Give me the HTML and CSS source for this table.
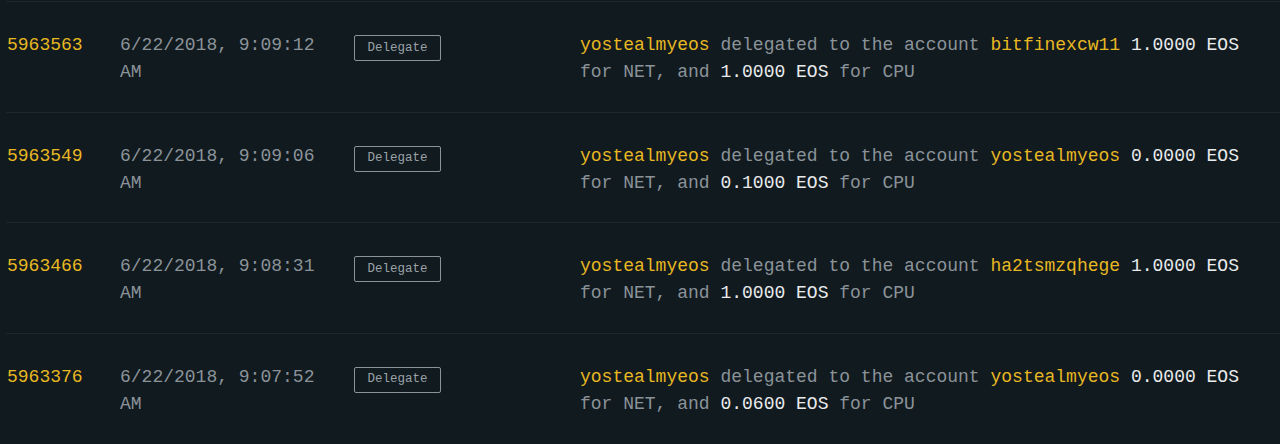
FILE: index.html
```html
<!DOCTYPE html>
<html lang="en">
<head>
<meta charset="utf-8">
<title>Actions</title>
<link rel="stylesheet" href="styles.css">
</head>
<body>
<div class="list">
  <div class="row">
    <div class="num">5963563</div>
    <div class="date">6/22/2018, 9:09:12 AM</div>
    <div class="act"><span class="btn">Delegate</span></div>
    <div class="desc"><span class="acc">yostealmyeos</span> delegated to the account <span class="acc">bitfinexcw11</span> <span class="amt">1.0000 EOS</span> for NET, and <span class="amt">1.0000 EOS</span> for CPU</div>
  </div>
  <div class="row">
    <div class="num">5963549</div>
    <div class="date">6/22/2018, 9:09:06 AM</div>
    <div class="act"><span class="btn">Delegate</span></div>
    <div class="desc"><span class="acc">yostealmyeos</span> delegated to the account <span class="acc">yostealmyeos</span> <span class="amt">0.0000 EOS</span> for NET, and <span class="amt">0.1000 EOS</span> for CPU</div>
  </div>
  <div class="row">
    <div class="num">5963466</div>
    <div class="date">6/22/2018, 9:08:31 AM</div>
    <div class="act"><span class="btn">Delegate</span></div>
    <div class="desc"><span class="acc">yostealmyeos</span> delegated to the account <span class="acc">ha2tsmzqhege</span> <span class="amt">1.0000 EOS</span> for NET, and <span class="amt">1.0000 EOS</span> for CPU</div>
  </div>
  <div class="row">
    <div class="num">5963376</div>
    <div class="date">6/22/2018, 9:07:52 AM</div>
    <div class="act"><span class="btn">Delegate</span></div>
    <div class="desc"><span class="acc">yostealmyeos</span> delegated to the account <span class="acc">yostealmyeos</span> <span class="amt">0.0000 EOS</span> for NET, and <span class="amt">0.0600 EOS</span> for CPU</div>
  </div>
</div>
</body>
</html>
```
FILE: styles.css
```css
html, body {
  margin: 0;
  background: #111a1f;
}
body {
  font-family: "Liberation Mono", "DejaVu Sans Mono", monospace;
  font-size: 18px;
  line-height: 27px;
  color: #8b9399;
  overflow: hidden;
}
.list {
  padding: 1px 0 0 6px;
}
.row {
  display: grid;
  grid-template-columns: 114px 234px 226px 680px;
  border-top: 1px solid #1e272d;
  padding: 30px 0 25.5px;
  align-items: start;
}
.num {
  color: #e8b822;
  padding-left: 1px;
}
.date {
  width: 210px;
}
.act {
  display: block;
  padding-top: 3px;
}
.btn {
  display: flex;
  align-items: center;
  justify-content: center;
  box-sizing: border-box;
  width: 87px;
  height: 26px;
  border: 1px solid #8b9399;
  border-radius: 2px;
  font-size: 12.5px;
  line-height: 1;
  color: #9ba2a7;
}
.acc {
  color: #e8b822;
}
.amt {
  color: #e9ebec;
}
```
